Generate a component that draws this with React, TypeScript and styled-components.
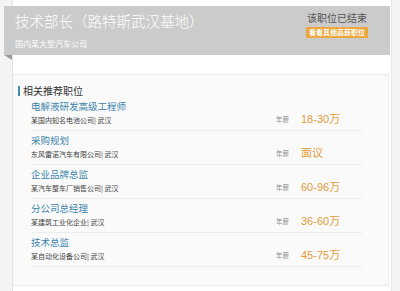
import React from 'react'
import styled, { createGlobalStyle } from 'styled-components'

interface Job {
  title: string
  company: string
  salary: string
}

const jobs: Job[] = [
  { title: '电解液研发高级工程师', company: '某国内知名电池公司| 武汉', salary: '18-30万' },
  { title: '采购规划', company: '东风雷诺汽车有限公司| 武汉', salary: '面议' },
  { title: '企业品牌总监', company: '某汽车整车厂销售公司| 武汉', salary: '60-96万' },
  { title: '分公司总经理', company: '某建筑工业化企业| 武汉', salary: '36-60万' },
  { title: '技术总监', company: '某自动化设备公司| 武汉', salary: '45-75万' },
]

const App = () => {
  return (
    <>
      <GlobalStyle />
      <Page>
        <Header>
          <HeaderMain>
            <JobTitle>技术部长（路特斯武汉基地）</JobTitle>
            <Company>国内某大型汽车公司</Company>
          </HeaderMain>
          <Status>
            <StatusText>该职位已结束</StatusText>
            <MoreButton>看看其他高薪职位</MoreButton>
          </Status>
        </Header>

        <Panel>
          <PanelTitle>相关推荐职位</PanelTitle>
          <List>
            {jobs.map((job, index) => (
              <Row key={index}>
                <RowInfo>
                  <RowTitle>{job.title}</RowTitle>
                  <RowCompany>{job.company}</RowCompany>
                </RowInfo>
                <Salary>
                  <SalaryLabel>年薪</SalaryLabel>
                  <SalaryValue>{job.salary}</SalaryValue>
                </Salary>
              </Row>
            ))}
          </List>
        </Panel>
      </Page>
    </>
  )
}

export default App

const GlobalStyle = createGlobalStyle`
    html, body {
        margin: 0;
        padding: 0;
        background-color: #f4f4f4;
        font-family: "Noto Sans CJK SC", "Liberation Sans", sans-serif;
    }
`

const Page = styled.div`
    margin-left: 12px;
    width: 380px;
    height: 291px;
    box-sizing: border-box;
    padding-top: 6px;
    background-color: #ffffff;
    border-left: 1px solid #e4e4e4;
    border-right: 1px solid #e8e8e8;
`

const Header = styled.div`
    position: relative;
    display: flex;
    justify-content: space-between;
    margin-left: -9px;
    width: 386px;
    height: 49px;
    box-sizing: border-box;
    padding: 5px 22px 0 11px;
    background-color: #cbcbcb;

    &::after {
        content: '';
        position: absolute;
        left: 0;
        bottom: -5px;
        border-top: 5px solid #9a9a9a;
        border-left: 8px solid transparent;
    }
`

const HeaderMain = styled.div`
    display: flex;
    flex-direction: column;
`

const JobTitle = styled.div`
    color: #ffffff;
    font-size: 14.5px;
    line-height: 20px;
    font-weight: 300;
`

const Company = styled.div`
    margin-top: 8px;
    color: #ffffff;
    font-size: 8px;
    line-height: 10px;
`

const Status = styled.div`
    display: flex;
    flex-direction: column;
    align-items: center;
`

const StatusText = styled.div`
    color: #555555;
    font-size: 10px;
    line-height: 13px;
`

const MoreButton = styled.div`
    margin-top: 3px;
    padding: 0 3px;
    height: 11px;
    line-height: 11px;
    background-color: #eba63c;
    color: #ffffff;
    font-size: 7px;
    font-weight: 700;
`

const Panel = styled.div`
    margin-top: 19px;
    width: 376px;
    height: 212px;
    box-sizing: border-box;
    padding: 11px 0 0 5px;
    background-color: #fafafa;
    border: 1px solid #ececec;
    border-left: none;
`

const PanelTitle = styled.div`
    border-left: 2px solid #3c8fb0;
    padding-left: 3px;
    color: #333333;
    font-size: 10px;
    line-height: 10px;
`

const List = styled.div`
    display: flex;
    flex-direction: column;
    margin-top: 1px;
    padding-left: 13px;
    width: 331px;
`

const Row = styled.div`
    display: flex;
    align-items: flex-end;
    justify-content: space-between;
    height: 34px;
    box-sizing: border-box;
    padding: 3px 0 5px;
    border-bottom: 1px solid #ececec;
`

const RowInfo = styled.div`
    display: flex;
    flex-direction: column;
`

const RowTitle = styled.div`
    color: #3a84ab;
    font-size: 9.5px;
    line-height: 14px;
`

const RowCompany = styled.div`
    margin-top: 2px;
    color: #444444;
    font-size: 7px;
    line-height: 10px;
`

const Salary = styled.div`
    display: flex;
    align-items: center;
    width: 86px;
    line-height: 12px;
`

const SalaryLabel = styled.span`
    width: 25px;
    color: #8a8a8a;
    font-size: 6.5px;
`

const SalaryValue = styled.span`
    color: #e29b3c;
    font-family: "Liberation Sans", "Noto Sans CJK SC", sans-serif;
    font-size: 11px;
`
